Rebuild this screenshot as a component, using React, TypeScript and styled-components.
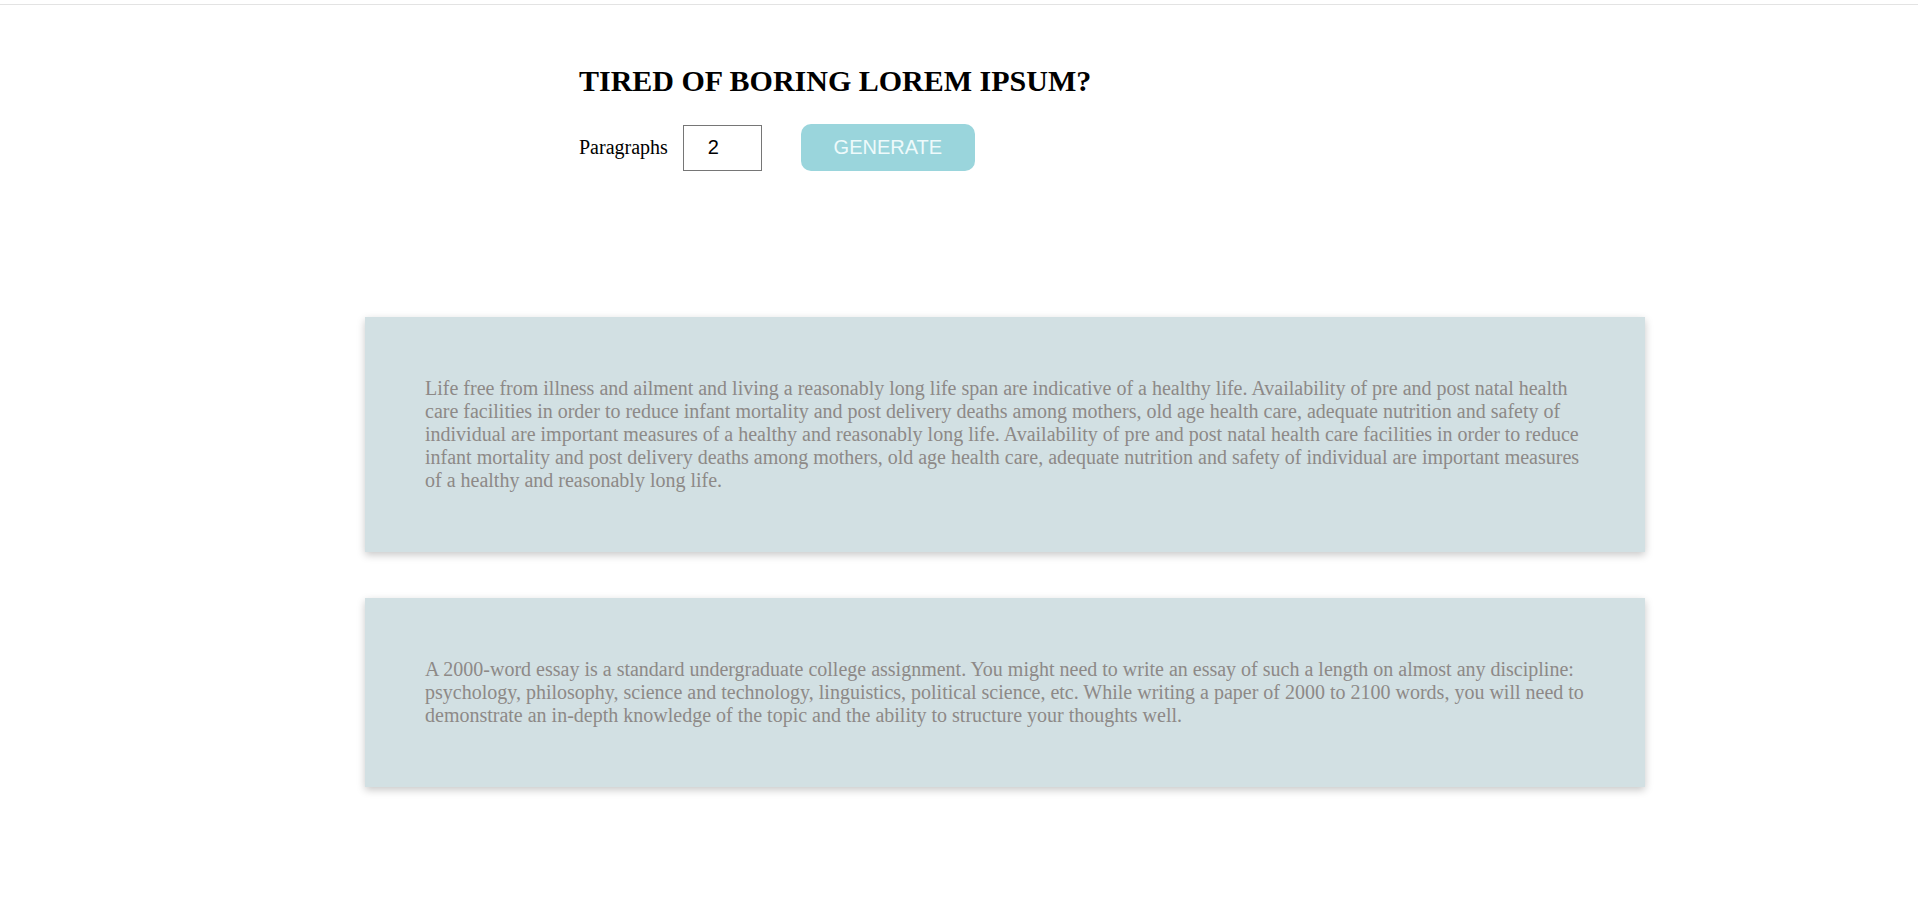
import React from "react";
import styled, { createGlobalStyle } from "styled-components";

const Global = createGlobalStyle`
  html, body { margin: 0; padding: 0; background: #ffffff; }
  body { font-family: "Liberation Serif", "Times New Roman", serif; }
`;

const Page = styled.div`
  border-top: 1px solid #e3e3e3;
  margin-top: 4px;
  padding-bottom: 80px;
`;

const Header = styled.section`
  width: 760px;
  margin: 58px auto 0;
`;

const Title = styled.h1`
  margin: 0;
  font-family: "Liberation Serif", "Times New Roman", serif;
  font-weight: 700;
  font-size: 30px;
  line-height: 35px;
  color: #000;
`;

const Controls = styled.form`
  display: flex;
  align-items: center;
  margin-top: 26px;
`;

const Label = styled.label`
  font-family: "Liberation Serif", "Times New Roman", serif;
  font-size: 20px;
  color: #000;
  margin-right: 15px;
`;

const NumberInput = styled.input`
  box-sizing: border-box;
  width: 79px;
  height: 46px;
  border: 1px solid #767676;
  border-radius: 0;
  padding: 0 0 0 24px;
  font-family: "Liberation Sans", Arial, sans-serif;
  font-size: 20px;
  color: #000;
  background: #fff;
  outline: none;
`;

const Button = styled.button`
  box-sizing: border-box;
  width: 174px;
  height: 47px;
  margin-left: 39px;
  border: none;
  border-radius: 10px;
  background: #9ad5dc;
  color: #eefafb;
  font-family: "Liberation Sans", Arial, sans-serif;
  font-size: 20px;
  cursor: pointer;
`;

const Cards = styled.section`
  display: flex;
  flex-direction: column;
  gap: 46px;
  margin-top: 146px;
  padding-left: 365px;
`;

const Card = styled.article`
  box-sizing: border-box;
  width: 1280px;
  padding: 60px;
  background: #d2e0e3;
  box-shadow: 0 3px 8px rgba(0, 0, 0, 0.22);
`;

const Text = styled.p`
  margin: 0;
  font-family: "Liberation Serif", "Times New Roman", serif;
  font-size: 20px;
  line-height: 23px;
  color: #8d8987;
`;

const paragraphs = [
  "Life free from illness and ailment and living a reasonably long life span are indicative of a healthy life. Availability of pre and post natal health care facilities in order to reduce infant mortality and post delivery deaths among mothers, old age health care, adequate nutrition and safety of individual are important measures of a healthy and reasonably long life. Availability of pre and post natal health care facilities in order to reduce infant mortality and post delivery deaths among mothers, old age health care, adequate nutrition and safety of individual are important measures of a healthy and reasonably long life.",
  "A 2000-word essay is a standard undergraduate college assignment. You might need to write an essay of such a length on almost any discipline: psychology, philosophy, science and technology, linguistics, political science, etc. While writing a paper of 2000 to 2100 words, you will need to demonstrate an in-depth knowledge of the topic and the ability to structure your thoughts well.",
];

export default function App() {
  return (
    <Page>
      <Global />
      <Header>
        <Title>TIRED OF BORING LOREM IPSUM?</Title>
        <Controls onSubmit={(e) => e.preventDefault()}>
          <Label htmlFor="amount">Paragraphs</Label>
          <NumberInput id="amount" type="text" defaultValue="2" />
          <Button type="submit">GENERATE</Button>
        </Controls>
      </Header>
      <Cards>
        {paragraphs.map((p, i) => (
          <Card key={i}>
            <Text>{p}</Text>
          </Card>
        ))}
      </Cards>
    </Page>
  );
}
